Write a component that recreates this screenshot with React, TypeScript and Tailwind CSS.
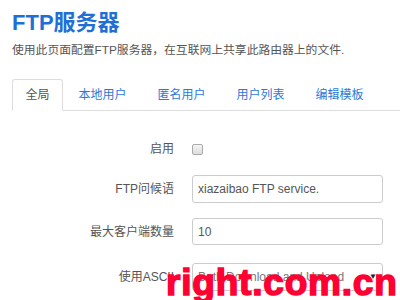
import React from "react";

const tabs = ["全局", "本地用户", "匿名用户", "用户列表", "编辑模板"];

function Row({ label, className, children }: { label: string; className?: string; children: React.ReactNode }) {
  return (
    <div className={"flex items-center " + (className ?? "")}>
      <div className="w-[162px] text-right text-[12px] text-[#555]">{label}</div>
      <div className="ml-[18px] flex items-center">{children}</div>
    </div>
  );
}

export default function App() {
  return (
    <div className="relative w-[400px] h-[300px] overflow-hidden bg-white font-['Liberation_Sans','Noto_Sans_CJK_SC',sans-serif]">
      <div className="pl-[12px] pt-[9px]">
        <h1 className="text-[22px] leading-[28px] font-bold text-[#1f6fd6]">FTP服务器</h1>
        <p className="mt-[5px] text-[11.8px] leading-[16px] text-[#555]">
          使用此页面配置FTP服务器，在互联网上共享此路由器上的文件.
        </p>
      </div>

      <div className="mt-[21px] ml-[12px] flex border-b border-[#ddd] h-[32px]">
        {tabs.map((t, i) =>
          i === 0 ? (
            <div
              key={t}
              className="w-[51px] -mb-px flex items-center justify-center rounded-t-[3px] border border-[#ddd] border-b-white bg-white text-[12px] text-[#555]"
            >
              {t}
            </div>
          ) : (
            <div key={t} className="px-[15.5px] flex items-center text-[12px] text-[#2a7ad8]">
              {t}
            </div>
          )
        )}
      </div>

      <div className="ml-[12px] flex flex-col">
        <Row label="启用" className="mt-[28px] h-[20px]">
          <span className="block w-[11px] h-[11px] rounded-[2px] border border-[#aaa] bg-gradient-to-b from-[#f4f4f4] to-[#ddd]" />
        </Row>
        <Row label="FTP问候语" className="mt-[16px]">
          <div className="w-[191px] h-[28px] rounded-[3px] border border-[#ccc] px-[5px] flex items-center text-[12px] text-[#555]">
            xiazaibao FTP service.
          </div>
        </Row>
        <Row label="最大客户端数量" className="mt-[15px]">
          <div className="w-[191px] h-[27px] rounded-[3px] border border-[#ccc] px-[5px] flex items-center text-[12px] text-[#555]">
            10
          </div>
        </Row>
        <Row label="使用ASCII" className="mt-[18px]">
          <div className="w-[191px] h-[28px] rounded-[3px] border border-[#ccc] px-[5px] flex items-center justify-between text-[12px] text-[#777]">
            <span>Both Download and Upload</span>
            <span className="text-[8px] text-[#222]">▼</span>
          </div>
        </Row>
      </div>

      <div className="absolute left-[166px] top-[261px] text-[37px] leading-[44px] font-black tracking-[0.8px] text-[#ff0033] [-webkit-text-stroke:1.5px_#ff0033]">
        right.com.cn
      </div>
    </div>
  );
}
